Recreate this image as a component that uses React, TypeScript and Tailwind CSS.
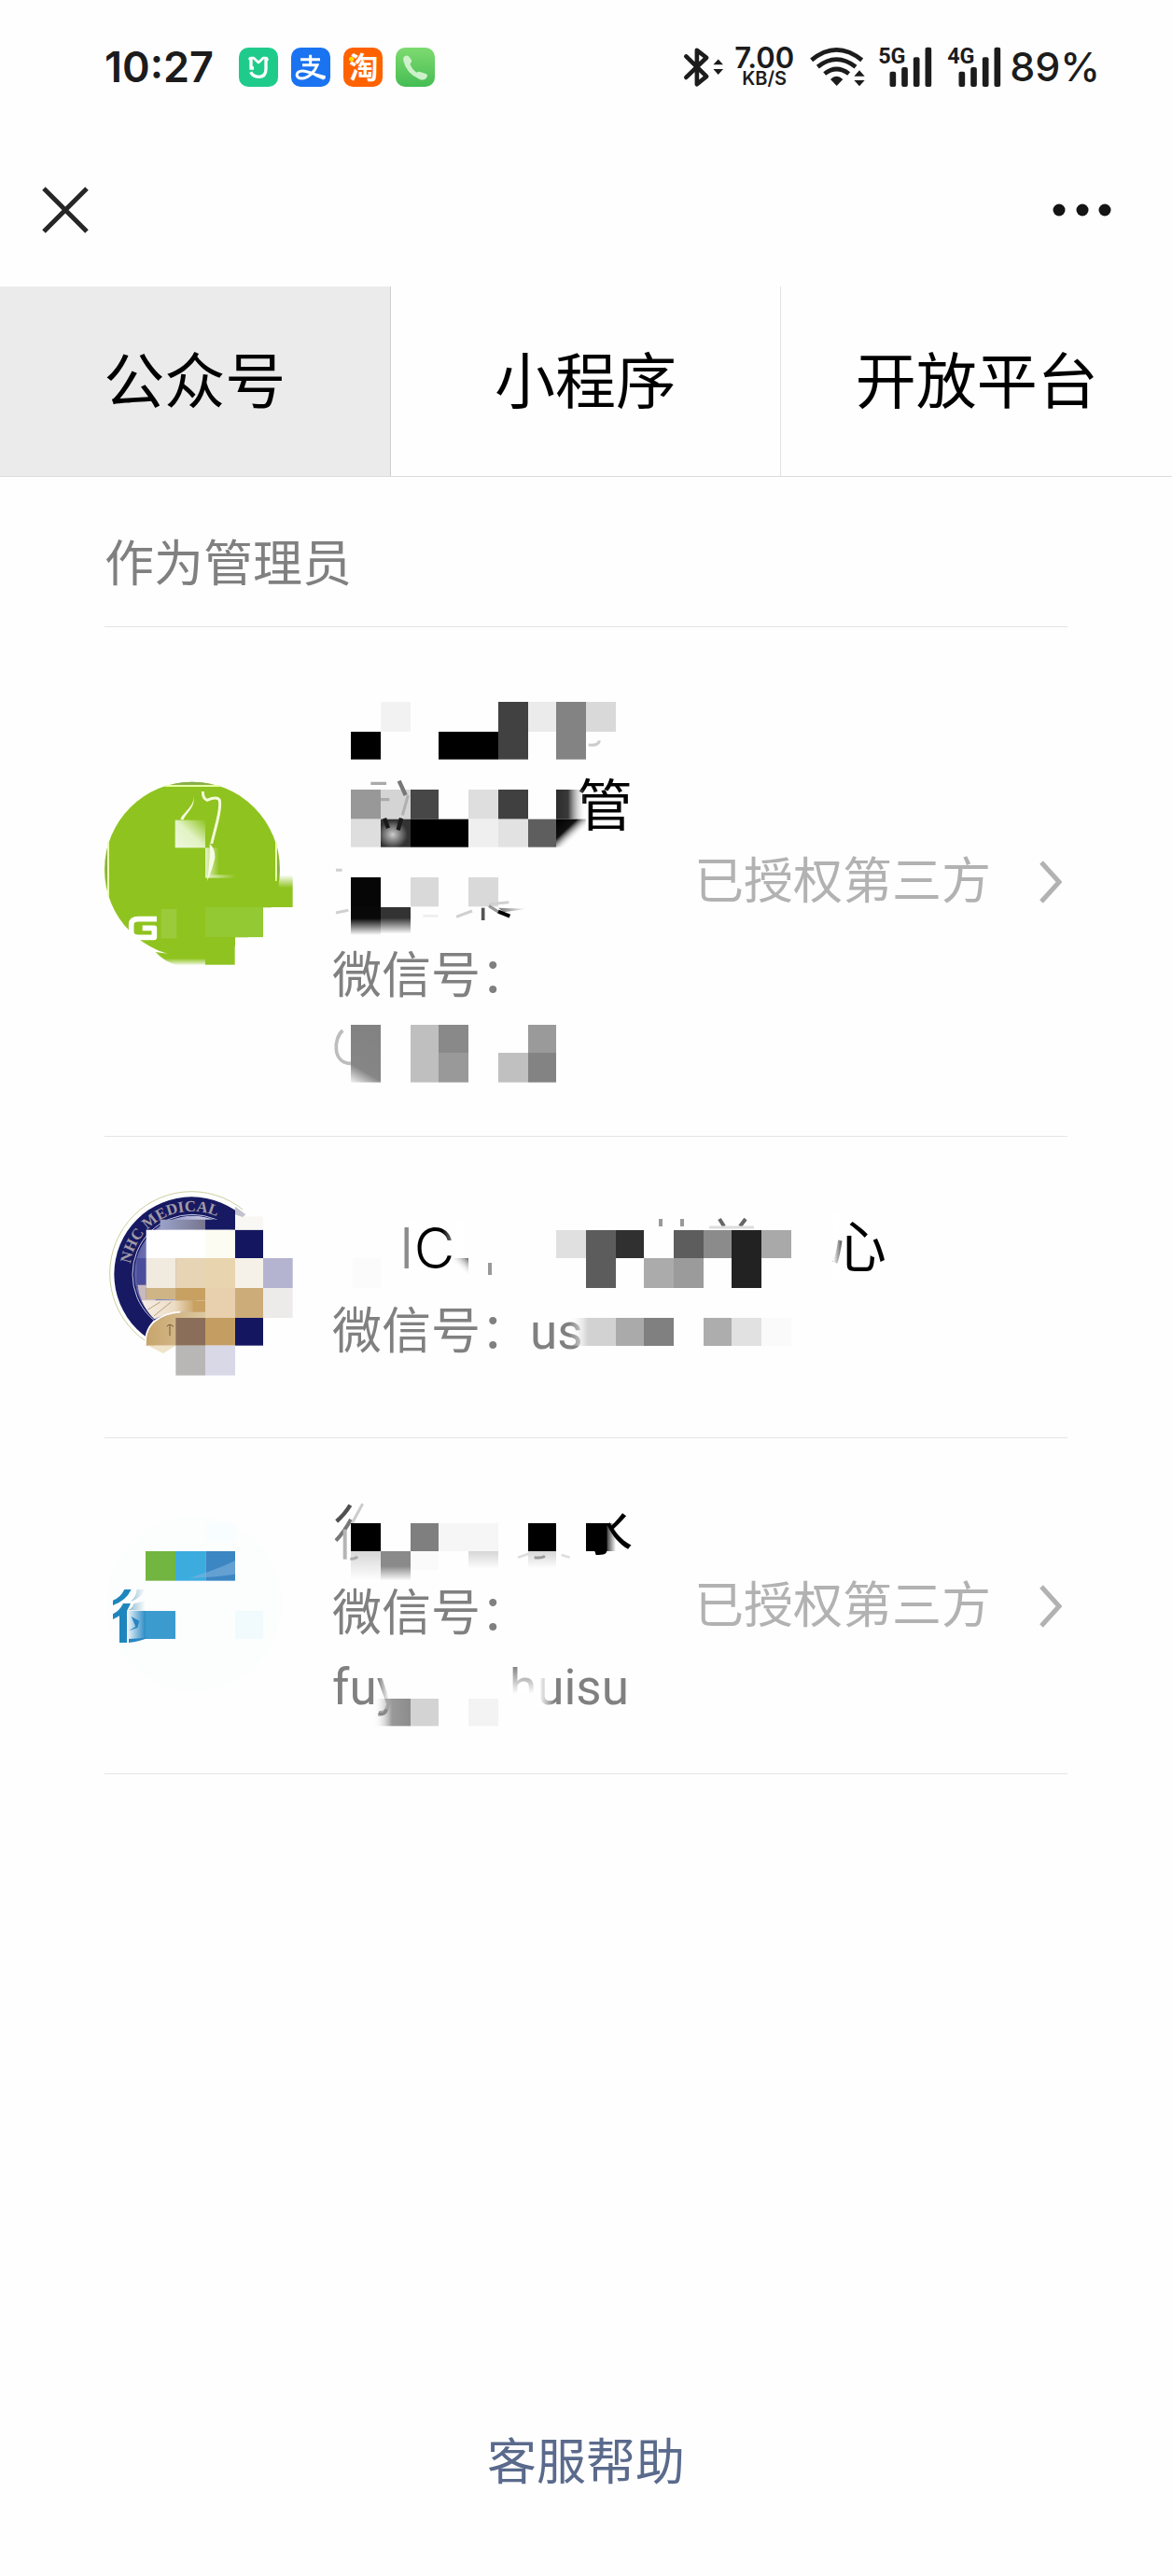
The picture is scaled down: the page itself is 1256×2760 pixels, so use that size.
import type { ReactNode } from 'react';

type Cell = [x: number, y: number, w: number, h: number, fill: string];

function Cells({ cells }: { cells: Cell[] }) {
  return (
    <>
      {cells.map(([x, y, w, h, fill], i) => (
        <rect key={i} x={x} y={y} width={w} height={h} fill={fill} />
      ))}
    </>
  );
}

/* ---------- status bar ---------- */

function AppIcon({ label, className, children }: { label: string; className: string; children: ReactNode }) {
  return (
    <span className={`flex size-[42px] rounded-[10px] ${className}`}>
      <svg viewBox="0 0 126 126" className="size-full overflow-visible" role="img" aria-label={label}>
        {children}
      </svg>
    </span>
  );
}

function Signal({ label }: { label: string }) {
  return (
    <svg viewBox="700 54 176 138" className="h-[46px] w-[59px] overflow-visible" role="img" aria-label={`${label} signal`}>
      <text x="700" y="110" fontSize="70" fontWeight="700" fill="#1c1c1c" className="font-['Roboto',sans-serif]">
        {label}
      </text>
      <g fill="#1c1c1c">
        <rect x="737" y="137" width="20" height="49" rx="6" />
        <rect x="775" y="123" width="20" height="63" rx="6" />
        <rect x="813" y="91" width="20" height="95" rx="6" />
        <rect x="851" y="59" width="20" height="127" rx="6" />
      </g>
    </svg>
  );
}

function StatusBar() {
  return (
    <div className="flex h-[143px] items-center justify-between pr-[77px] pl-[112px] font-['Inter',sans-serif] text-[#1c1c1c]">
      <div className="flex items-center gap-[27px]">
        <span className="text-[45px] leading-none font-semibold">10:27</span>
        <div className="flex gap-[14px]">
          <AppIcon label="Mi Home" className="bg-[#1fcb8b]">
            <path d="M35 40 V36 Q35 33 40 33 H47 L63 48 L79 33 H86 Q91 33 91 38 V42" fill="none" stroke="#fff" strokeWidth="8" strokeLinejoin="round" />
            <path d="M39 36 V66 H48 M87 36 V68 Q87 94 63 94 Q46 94 38 79" fill="none" stroke="#fff" strokeWidth="10" />
          </AppIcon>
          <AppIcon label="Alipay" className="bg-[#1a73f0]">
            <path
              d="M30 38 H93 M62 23 V55 M36 56 H84 C76 78 54 99 34 99 C12 99 14 75 36 75 C58 75 84 92 110 97"
              fill="none"
              stroke="#fff"
              strokeWidth="9"
            />
            <path d="M82 83 L110 90 Q110 98 104 104 L76 92 Z" fill="#fff" opacity=".8" />
          </AppIcon>
          <AppIcon label="Taobao" className="bg-[#ff6200]">
            <text x="65" y="98" textAnchor="middle" fontSize="94" fontWeight="700" fill="#fff" className="font-['Noto_Sans_CJK_SC',sans-serif]">
              淘
            </text>
            <circle cx="26" cy="37" r="8" fill="#ffd800" />
          </AppIcon>
          <AppIcon label="Phone" className="bg-linear-to-b from-[#7ddb70] to-[#43bd53]">
            <path
              d="M26 30 Q35 21 43 29 L50 38 Q54 44 46 53 Q52 68 67 80 Q74 75 81 79 L99 85 Q105 90 98 99 Q89 107 76 101 Q34 83 25 42 Q24 33 26 30 Z"
              fill="#d9f5d6"
              opacity=".9"
            />
          </AppIcon>
        </div>
      </div>
      <div className="flex items-center">
        <svg viewBox="60 54 136 138" className="h-[46px] w-[45px]" role="img" aria-label="Bluetooth">
          <path d="M70 88 L136 153 L105 178 V68 L136 92 L70 156" fill="none" stroke="#1c1c1c" strokeWidth="14" strokeLinejoin="round" strokeLinecap="round" />
          <path d="M174 97 L190 115 H158 Z M158 129 H190 L174 147 Z" fill="#1c1c1c" />
        </svg>
        <div className="ml-[10px] flex flex-col items-center leading-none font-semibold">
          <span className="text-[31px] leading-[25px]">7.00</span>
          <span className="text-[20px] leading-[20px]">KB/S</span>
        </div>
        <svg viewBox="474 54 186 138" className="ml-4 h-[46px] w-[62px]" role="img" aria-label="Wi-Fi">
          <path d="M482 100 Q562 34 644 100 M502 122 Q562 74 624 122 M524 144 Q562 114 602 144" fill="none" stroke="#1c1c1c" strokeWidth="14" strokeLinecap="butt" />
          <path d="M543 162 Q562 142 583 162 L563 183 Z" fill="#1c1c1c" />
          <path d="M636 133 L653 152 H619 Z M619 165 H653 L636 184 Z" fill="#1c1c1c" />
        </svg>
        <div className="ml-3 flex gap-[15px]">
          <Signal label="5G" />
          <Signal label="4G" />
        </div>
        <span className="ml-2 text-[43px] leading-none font-medium">89%</span>
      </div>
    </div>
  );
}

/* ---------- avatars ---------- */

function GreenAvatar() {
  return (
    <svg viewBox="36 310 612 666" className="h-[222px] w-[204px] shrink-0" role="img" aria-label="公众号头像">
      <defs>
        <linearGradient id="green-fade" x1="0" y1="0" x2="0" y2="1">
          <stop offset="0" stopColor="#8fc31f" />
          <stop offset=".5" stopColor="#8fc31f" />
          <stop offset="1" stopColor="#8fc31f" stopOpacity=".15" />
        </linearGradient>
        <linearGradient id="green-top" x1="0" y1="0" x2="0" y2="1">
          <stop offset="0" stopColor="#8fc31f" stopOpacity="0" />
          <stop offset=".4" stopColor="#8fc31f" />
        </linearGradient>
        <linearGradient id="green-pale" x1="0" y1="1" x2="1" y2="0">
          <stop offset="0" stopColor="#eef8dc" />
          <stop offset=".5" stopColor="#e2f3c4" />
          <stop offset="1" stopColor="#8fc31f" />
        </linearGradient>
        <linearGradient id="green-pale-h">
          <stop offset="0" stopColor="#e4f4c8" />
          <stop offset="1" stopColor="#8fc31f" />
        </linearGradient>
      </defs>
      <circle cx="318" cy="603" r="282" fill="#8fc31f" />
      <path d="M230 334 H408 M48 515 V690 M588 515 V650" stroke="#e9ffab" strokeWidth="6" />
      <path d="M248 330 Q318 312 386 330 Z M45 530 Q36 600 45 660 Z M591 530 Q602 600 592 650 Z" fill="#86ad4c" />
      <rect x="546" y="640" width="50" height="84" fill="#8fc31f" />
      <rect x="588" y="620" width="53" height="104" fill="url(#green-top)" />
      <rect x="360" y="724" width="186" height="97" fill="#93c932" />
      <rect x="456" y="821" width="130" height="90" fill="#fefefe" />
      <rect x="546" y="725" width="60" height="100" fill="#fefefe" />
      <rect x="360" y="821" width="95" height="88" fill="#8fc31f" />
      <path d="M200 868 Q240 875 265 872 H362 V909 H265 Q230 900 200 868" fill="url(#green-fade)" />
      <rect x="218" y="730" width="50" height="94" fill="#9bcb3b" />
      <rect x="263" y="444" width="97" height="89" fill="url(#green-pale)" />
      <rect x="360" y="533" width="44" height="92" fill="url(#green-pale-h)" />
      <rect x="360" y="620" width="98" height="10" fill="url(#green-pale-h)" />
      <path d="M322 362 C330 400 280 425 281 443 L290 443 C300 418 330 405 322 362" fill="#f4fbdc" />
      <path d="M352 352 Q352 376 366 380 Q398 366 406 380 Q410 400 398 450 L380 520" fill="none" stroke="#f4fbdc" strokeWidth="9" />
      <path d="M374 520 Q392 535 391 565 Q384 600 366 640 Q376 570 374 520" fill="#f6fce6" />
      <path d="M204 762 H145 Q122 762 122 780 V803 Q122 821 145 821 H196 V791 H158" fill="none" stroke="#fff" strokeWidth="17" strokeLinejoin="round" />
      <path d="M108 790 L124 826 H150 L132 838 L102 806 Z" fill="#fff" />
    </svg>
  );
}

function MedicalAvatar() {
  return (
    <svg viewBox="36 24 612 666" className="h-[222px] w-[204px] shrink-0" role="img" aria-label="NHC Medical">
      <defs>
        <clipPath id="ring-clip">
          <path d="M36 24 H456 V173 H330 V440 L192 466 L165 526 L36 600 Z" />
        </clipPath>
        <clipPath id="rim-clip">
          <path d="M36 24 H480 V140 H316 V313 L225 570 H36 Z" />
        </clipPath>
        <path id="ring-text" d="M119 282 A200 200 0 0 1 440 156" />
        <linearGradient id="inner-fade">
          <stop offset="0" stopColor="#5b5da5" />
          <stop offset=".4" stopColor="#a9acd2" />
          <stop offset="1" stopColor="#fff" />
        </linearGradient>
        <linearGradient id="top-shade">
          <stop offset="0" stopColor="#9aa3c8" />
          <stop offset="1" stopColor="#77758f" />
        </linearGradient>
        <linearGradient id="tan-fade">
          <stop offset="0" stopColor="#c7a46b" />
          <stop offset="1" stopColor="#dcc7a0" />
        </linearGradient>
        <linearGradient id="floor-fade">
          <stop offset="0" stopColor="#f6efe6" />
          <stop offset=".6" stopColor="#ecdcc4" />
          <stop offset="1" stopColor="#c8a162" />
        </linearGradient>
      </defs>
      <circle cx="316" cy="313" r="263" fill="none" stroke="#c9cf9f" strokeWidth="3" clipPath="url(#rim-clip)" />
      <g clipPath="url(#ring-clip)">
        <circle cx="316" cy="316" r="249" fill="#171a62" />
        <circle cx="320" cy="316" r="188" fill="url(#inner-fade)" />
        <circle cx="318" cy="316" r="192" fill="none" stroke="#c9cbe4" strokeWidth="3" />
      </g>
      <rect x="215" y="140" width="145" height="33" fill="url(#top-shade)" />
      <rect x="360" y="140" width="96" height="33" fill="#171a62" />
      <rect x="140" y="264" width="30" height="96" fill="#4b4f9b" />
      <path d="M142 350 H170 V395 H200 V440 L190 452 Q150 410 142 350" fill="#c9bac0" />
      <path d="M156 400 H330 V437 L280 437 Q230 440 196 460 Q170 435 156 400" fill="url(#floor-fade)" />
      <path d="M175 430 L215 405 M195 450 L250 405" stroke="#b99e84" strokeWidth="3" />
      <text fontSize="50" fontWeight="700" fill="#a29ba6" className="font-['Liberation_Serif',serif]">
        <textPath href="#ring-text">NHC MEDICAL</textPath>
      </text>
      <Cells
        cells={[
          [170, 173, 190, 91, '#ffffff'],
          [360, 173, 96, 91, '#fcfcf3'],
          [456, 173, 90, 91, '#14165f'],
          [170, 264, 95, 96, '#f1eadf'],
          [265, 264, 95, 96, '#e6d4b5'],
          [360, 264, 96, 96, '#e8d4ae'],
          [456, 264, 90, 96, '#f6f1e8'],
          [546, 264, 95, 96, '#b4b4d0'],
          [170, 360, 95, 36, '#cfb485'],
          [265, 360, 95, 40, '#c8a162'],
          [320, 400, 40, 56, '#c8a162'],
          [360, 360, 96, 96, '#e8d0ae'],
          [456, 360, 90, 96, '#ccac78'],
          [546, 360, 95, 96, '#edebea'],
          [456, 130, 90, 43, '#f8f7f3'],
        ]}
      />
      <path d="M168 545 Q165 490 200 465 Q230 440 280 437 H360 V545 Z" fill="url(#tan-fade)" />
      <path d="M168 545 Q165 490 200 465 Q230 440 280 437" fill="none" stroke="#fff" strokeWidth="5" />
      <path d="M175 545 H265 L225 570 Z" fill="#efe3c9" />
      <path d="M236 484 Q244 472 258 484 M246 478 V514" fill="none" stroke="#6d5a3c" strokeWidth="3" />
      <Cells
        cells={[
          [265, 456, 95, 89, '#8b6e5a'],
          [360, 456, 96, 89, '#c39d62'],
          [456, 456, 90, 89, '#14165f'],
          [265, 545, 95, 96, '#b9b6b6'],
          [360, 545, 96, 96, '#d9d8e7'],
        ]}
      />
      <path d="M456 98 L490 124 L480 132 L456 124 Z" fill="#85839b" opacity=".5" />
    </svg>
  );
}

function WaterAvatar() {
  return (
    <svg viewBox="36 60 612 666" className="h-[222px] w-[204px] shrink-0" role="img" aria-label="公众号头像">
      <defs>
        <linearGradient id="stroke-fade">
          <stop offset="0" stopColor="#8cb9cf" />
          <stop offset="1" stopColor="#fff" />
        </linearGradient>
        <linearGradient id="cell-fade">
          <stop offset="0" stopColor="#2a86c2" stopOpacity="0" />
          <stop offset="1" stopColor="#2a8cc6" />
        </linearGradient>
      </defs>
      <circle cx="325" cy="385" r="282" fill="#fcfdfd" />
      <Cells
        cells={[
          [360, 125, 96, 60, '#f8fdff'],
          [168, 216, 96, 95, '#72b540'],
          [264, 216, 97, 95, '#3cacdf'],
          [361, 216, 95, 95, '#3c86c4'],
          [168, 408, 96, 90, '#3b9bcf'],
          [456, 408, 90, 90, '#f1fbfd'],
        ]}
      />
      <path d="M310 302 Q410 270 456 246 V290 Q390 300 310 302" fill="#7fb2dc" opacity=".6" />
      <rect x="106" y="408" width="62" height="90" fill="url(#cell-fade)" />
      <path d="M63 390 V374 Q88 365 100 339 H122 Q105 375 63 390 Z" fill="#1e86bd" />
      <path d="M63 435 V418 Q84 408 96 384 H120 L108 408 V510 H84 V424 Z" fill="#1e86bd" />
      <path d="M120 378 Q138 362 140 339 H166 Q150 370 120 378 Z M112 405 Q125 400 130 385 L168 375 V408 Z" fill="url(#stroke-fade)" />
      <path d="M114 472 L136 458 L122 426 L148 440 L142 462 Z M114 510 V498 L176 494 Q150 506 114 510" fill="#2a86c2" />
    </svg>
  );
}

/* ---------- redactions drawn over names ---------- */

function RedactionOne() {
  return (
    <svg viewBox="48 -24 1032 1335" className="absolute top-0 left-0 h-[445px] w-[344px]" aria-hidden="true">
      <defs>
        <linearGradient id="r1-down" x1="0" y1="0" x2="0" y2="1">
          <stop offset="0" stopColor="#080808" />
          <stop offset=".4" stopColor="#080808" />
          <stop offset="1" stopColor="#fff" />
        </linearGradient>
        <linearGradient id="r1-down2" x1="0" y1="0" x2="0" y2="1">
          <stop offset="0" stopColor="#333" />
          <stop offset=".4" stopColor="#333" />
          <stop offset="1" stopColor="#fff" />
        </linearGradient>
        <linearGradient id="r1-right">
          <stop offset="0" stopColor="#2c2c2c" />
          <stop offset=".4" stopColor="#3a3a3a" />
          <stop offset="1" stopColor="#fff" stopOpacity="0" />
        </linearGradient>
        <linearGradient id="r1-corner" x1="0" y1="0" x2="1" y2="1">
          <stop offset="0" stopColor="#000" />
          <stop offset=".35" stopColor="#111" />
          <stop offset=".65" stopColor="#fff" stopOpacity="0" />
        </linearGradient>
        <radialGradient id="r1-spot" cx=".4" cy=".55">
          <stop offset="0" stopColor="#ccc" />
          <stop offset="1" stopColor="#333" />
        </radialGradient>
        <linearGradient id="r1-grey" x1=".3" y1="0" x2="0" y2="1">
          <stop offset="0" stopColor="#828282" />
          <stop offset=".7" stopColor="#868686" />
          <stop offset="1" stopColor="#f2f2f2" />
        </linearGradient>
        <linearGradient id="r1-smear">
          <stop offset="0" stopColor="#777" />
          <stop offset="1" stopColor="#fff" />
        </linearGradient>
      </defs>
      <Cells
        cells={[
          [108, 162, 96, 89, '#000'],
          [205, 66, 95, 96, '#f2f2f2'],
          [390, 162, 192, 89, '#000'],
          [582, 66, 96, 185, '#414141'],
          [678, 66, 90, 96, '#ebebeb'],
          [768, 66, 96, 185, '#838383'],
          [864, 66, 96, 96, '#d9d9d9'],
          [108, 348, 96, 95, '#989898'],
          [204, 348, 96, 95, '#d4d4d4'],
          [300, 348, 90, 95, '#474747'],
          [486, 348, 96, 95, '#dedede'],
          [582, 348, 96, 95, '#404040'],
          [108, 443, 96, 90, '#dedede'],
          [300, 443, 186, 90, '#000'],
          [486, 443, 96, 90, '#efefef'],
          [582, 443, 96, 90, '#e2e2e2'],
          [678, 443, 90, 90, '#5e5e5e'],
          [300, 630, 90, 94, '#d9d9d9'],
          [486, 630, 96, 94, '#d9d9d9'],
          [300, 1104, 90, 185, '#bfbfbf'],
          [390, 1104, 96, 90, '#898989'],
          [390, 1194, 96, 95, '#999'],
          [582, 1194, 96, 95, '#c0c0c0'],
          [678, 1104, 90, 90, '#9a9a9a'],
          [678, 1194, 90, 95, '#838383'],
        ]}
      />
      <rect x="204" y="443" width="96" height="90" fill="url(#r1-spot)" />
      <rect x="768" y="348" width="96" height="95" fill="url(#r1-right)" />
      <rect x="768" y="443" width="96" height="90" fill="url(#r1-corner)" />
      <rect x="108" y="630" width="96" height="98" fill="#060606" />
      <rect x="108" y="726" width="96" height="90" fill="url(#r1-down)" />
      <rect x="204" y="726" width="96" height="86" fill="url(#r1-down2)" />
      <rect x="108" y="1104" width="96" height="185" fill="url(#r1-grey)" />
      <path d="M872 204 Q905 208 907 190" fill="none" stroke="#ccc" strokeWidth="9" />
      <path d="M172 328 H222 M204 380 H232" stroke="#aaa" strokeWidth="10" />
      <path d="M263 320 L284 366" stroke="#777" strokeWidth="13" />
      <path d="M292 366 L274 430" stroke="#b0b0b0" strokeWidth="9" />
      <path d="M216 440 L228 472 M270 440 L260 478" stroke="#1a1a1a" strokeWidth="13" />
      <path d="M60 607 H80 M60 744 L100 736 M447 757 L498 738 M552 716 L616 710" stroke="#d0d0d0" strokeWidth="9" />
      <path d="M340 754 H388" stroke="#eee" strokeWidth="8" />
      <path d="M533 728 V768" stroke="#555" strokeWidth="11" />
      <path d="M582 728 L675 731 L600 742 Z" fill="url(#r1-smear)" />
      <path d="M552 722 L584 742" stroke="#999" strokeWidth="10" />
      <path d="M582 740 L619 755" stroke="#000" strokeWidth="12" />
      <path d="M82 1122 C50 1150 50 1228 108 1228" fill="none" stroke="#bdbdbd" strokeWidth="11" />
    </svg>
  );
}

function RedactionTwo() {
  return (
    <svg viewBox="356 1291 660 176" className="absolute top-0 left-0 h-[176px] w-[660px]" aria-hidden="true">
      <defs>
        <linearGradient id="r2-right">
          <stop offset="0" stopColor="#fff" stopOpacity="0" />
          <stop offset="1" stopColor="#fff" />
        </linearGradient>
        <linearGradient id="r2-left">
          <stop offset="0" stopColor="#fff" />
          <stop offset="1" stopColor="#fff" stopOpacity="0" />
        </linearGradient>
        <linearGradient id="r2-cell">
          <stop offset="0" stopColor="#fff" stopOpacity="0" />
          <stop offset=".4" stopColor="#d2d2d2" />
        </linearGradient>
        <linearGradient id="r2-smear" x1="0" y1="1" x2="1" y2="0">
          <stop offset=".4" stopColor="#fff" stopOpacity="0" />
          <stop offset="1" stopColor="#666" />
        </linearGradient>
      </defs>
      <rect x="434" y="1308" width="12" height="56" fill="#fff" opacity=".55" />
      <rect x="474" y="1308" width="22" height="38" fill="url(#r2-right)" />
      <rect x="484" y="1348" width="18" height="17" fill="url(#r2-smear)" />
      <rect x="523" y="1353" width="4" height="13" fill="#999" />
      <Cells
        cells={[
          [378, 1348, 30, 32, '#fbfbfb'],
          [596, 1318, 32, 30, '#e0e0e0'],
          [628, 1318, 32, 62, '#5c5c5c'],
          [660, 1318, 30, 30, '#303030'],
          [690, 1348, 32, 32, '#ababab'],
          [722, 1318, 32, 30, '#5d5d5d'],
          [722, 1348, 32, 32, '#9b9b9b'],
          [754, 1318, 30, 30, '#8b8b8b'],
          [784, 1318, 32, 62, '#222'],
          [816, 1318, 32, 30, '#a9a9a9'],
          [660, 1412, 30, 30, '#aaa'],
          [690, 1412, 32, 30, '#808080'],
          [754, 1412, 30, 30, '#adadad'],
          [784, 1412, 32, 30, '#e1e1e1'],
          [816, 1412, 32, 30, '#fafafa'],
        ]}
      />
      <rect x="610" y="1412" width="50" height="30" fill="url(#r2-cell)" />
      <path d="M708 1306 V1314 M731 1306 V1314" stroke="#999" strokeWidth="4" />
      <path d="M771 1306 L776 1314 M799 1306 L793 1314" stroke="#666" strokeWidth="4" />
      <path d="M760 1315 H808" stroke="#ddd" strokeWidth="3" />
      <rect x="893" y="1300" width="14" height="70" fill="url(#r2-left)" />
    </svg>
  );
}

function RedactionThree() {
  return (
    <svg viewBox="48 3 1032 777" className="absolute top-0 left-0 h-[259px] w-[344px]" aria-hidden="true">
      <defs>
        <linearGradient id="r3-a" x1="0" y1="0" x2="0" y2="1">
          <stop offset="0" stopColor="#d6d6d6" />
          <stop offset="1" stopColor="#fff" />
        </linearGradient>
        <linearGradient id="r3-b" x1="0" y1="0" x2="0" y2="1">
          <stop offset="0" stopColor="#8a8a8a" />
          <stop offset=".5" stopColor="#8a8a8a" />
          <stop offset="1" stopColor="#fff" />
        </linearGradient>
        <linearGradient id="r3-c">
          <stop offset="0" stopColor="#fff" stopOpacity="0" />
          <stop offset=".5" stopColor="#999" />
          <stop offset="1" stopColor="#8c8c8c" />
        </linearGradient>
        <linearGradient id="r3-d">
          <stop offset="0" stopColor="#000" />
          <stop offset=".6" stopColor="#000" />
          <stop offset="1" stopColor="#000" stopOpacity="0" />
        </linearGradient>
        <linearGradient id="r3-e" x1="0" y1="0" x2="0" y2="1">
          <stop offset="0" stopColor="#fff" stopOpacity="0" />
          <stop offset="1" stopColor="#fff" />
        </linearGradient>
        <linearGradient id="r3-f">
          <stop offset="0" stopColor="#fff" />
          <stop offset="1" stopColor="#fff" stopOpacity="0" />
        </linearGradient>
        <linearGradient id="r3-g">
          <stop offset="0" stopColor="#fefefe" stopOpacity="0" />
          <stop offset=".5" stopColor="#fefefe" />
        </linearGradient>
      </defs>
      <path d="M106 68 Q88 98 62 120" fill="none" stroke="#505050" strokeWidth="13" />
      <path d="M108 114 Q88 152 60 182" fill="none" stroke="#777" strokeWidth="12" />
      <path d="M89 146 V242" stroke="#b5b5b5" strokeWidth="12" />
      <path d="M146 64 L112 126" stroke="#ccc" strokeWidth="9" />
      <rect x="835" y="40" width="105" height="86" fill="#fefefe" />
      <Cells
        cells={[
          [108, 126, 96, 90, '#000'],
          [300, 126, 90, 90, '#7f7f7f'],
          [390, 126, 192, 90, '#f6f6f6'],
          [678, 126, 90, 90, '#000'],
          [300, 690, 90, 88, '#d3d3d3'],
          [486, 690, 96, 88, '#f3f3f3'],
        ]}
      />
      <rect x="820" y="126" width="44" height="90" fill="#fefefe" />
      <rect x="864" y="126" width="96" height="90" fill="url(#r3-d)" />
      <rect x="108" y="216" width="96" height="95" fill="url(#r3-a)" />
      <rect x="204" y="216" width="96" height="95" fill="url(#r3-b)" />
      <rect x="300" y="216" width="90" height="60" fill="#fafafa" />
      <rect x="486" y="216" width="96" height="58" fill="url(#r3-a)" />
      <rect x="678" y="216" width="90" height="56" fill="url(#r3-a)" />
      <path d="M106 240 Q120 242 130 234" fill="none" stroke="#aaa" strokeWidth="9" />
      <path d="M645 236 L680 224 M785 228 L812 236" stroke="#ddd" strokeWidth="8" />
      <path d="M698 236 Q720 240 732 232" fill="none" stroke="#999" strokeWidth="9" />
      <rect x="196" y="616" width="70" height="74" fill="url(#r3-g)" />
      <rect x="180" y="690" width="120" height="88" fill="url(#r3-c)" />
      <path d="M196 740 Q220 742 222 724" fill="none" stroke="#888" strokeWidth="10" />
      <rect x="610" y="585" width="108" height="90" fill="url(#r3-e)" />
      <rect x="610" y="674" width="108" height="50" fill="#fefefe" />
      <rect x="712" y="610" width="50" height="110" fill="url(#r3-f)" />
    </svg>
  );
}

/* ---------- list ---------- */

const nameLine = 'h-[93px] text-[60px] whitespace-pre text-black';
const idLine = 'h-[83px] text-[53px] whitespace-pre text-[#808080]';

function Account({ avatar, authorised, children }: { avatar: ReactNode; authorised?: boolean; children: ReactNode }) {
  return (
    <li className="border-b border-[#e5e5e5]">
      <a href="#account" className="flex items-center py-[50px]">
        {avatar}
        <div className="relative ml-10 min-w-0 flex-1">{children}</div>
        {authorised && (
          <div className="flex shrink-0 items-center gap-[52px] pr-[6px]">
            <span className="text-[53px] leading-[80px] text-[#b2b2b2]">已授权第三方</span>
            <svg viewBox="0 0 24 46" className="h-[46px] w-6" aria-hidden="true">
              <path d="M2 2 L21 23 L2 44" fill="none" stroke="#b2b2b2" strokeWidth="5" />
            </svg>
          </div>
        )}
      </a>
    </li>
  );
}

export default function App() {
  return (
    <div className="flex min-h-screen flex-col bg-[#fefefe] font-['Roboto','Noto_Sans_CJK_SC',sans-serif]">
      <StatusBar />
      <header className="flex h-[164px] items-center justify-between pr-[64px] pl-[44px]">
        <button type="button" aria-label="关闭">
          <svg viewBox="0 0 52 52" className="size-[52px]">
            <path d="M3 3 L49 49 M49 3 L3 49" stroke="#262626" strokeWidth="5" />
          </svg>
        </button>
        <button type="button" aria-label="更多">
          <svg viewBox="0 0 64 16" className="h-4 w-16">
            <g fill="#141414">
              <circle cx="7" cy="8" r="6.5" />
              <circle cx="32" cy="8" r="6.5" />
              <circle cx="56" cy="8" r="6.5" />
            </g>
          </svg>
        </button>
      </header>

      <nav className="grid h-[204px] grid-cols-3 border-b border-[#dcdcdc] text-[65px] text-black">
        <button type="button" className="border-r border-[#cfcfcf] bg-[#ebebeb] pt-1">公众号</button>
        <button type="button" className="border-r border-[#e2e2e2] pt-1">小程序</button>
        <button type="button" className="pt-1">开放平台</button>
      </nav>

      <main className="px-[112px]">
        <h1 className="border-b border-[#e5e5e5] pt-[54px] pb-[26px] text-[53px] leading-[80px] text-[#808080]">作为管理员</h1>
        <ul>
          <Account avatar={<GreenAvatar />} authorised>
            <div className={nameLine} />
            <div className={`${nameLine} pl-[262px] leading-[99px]`}>管</div>
            <div className={nameLine} />
            <div className={`${idLine} leading-[91px]`}>微信号：</div>
            <div className={idLine} />
            <RedactionOne />
          </Account>
          <Account avatar={<MedicalAvatar />}>
            <div className={`${nameLine} flex leading-[93px]`}>
              <span className="w-[534px] pl-[72px] font-['Inter',sans-serif] font-light">IC</span>
              <span>心</span>
            </div>
            <div className={`${idLine} leading-[87px]`}>微信号：us</div>
            <RedactionTwo />
          </Account>
          <Account avatar={<WaterAvatar />} authorised>
            <div className={`${nameLine} pl-[262px] leading-[99px]`}>水</div>
            <div className={`${idLine} leading-[91px]`}>微信号：</div>
            <div className={`${idLine} flex leading-[83px]`}>
              <span className="w-[190px]">fuy</span>
              <span>huisu</span>
            </div>
            <RedactionThree />
          </Account>
        </ul>
      </main>

      <footer className="mt-auto pb-[81px] text-center">
        <a href="#help" className="text-[53px] leading-[80px] text-[#5a6a8c]">客服帮助</a>
      </footer>
    </div>
  );
}
